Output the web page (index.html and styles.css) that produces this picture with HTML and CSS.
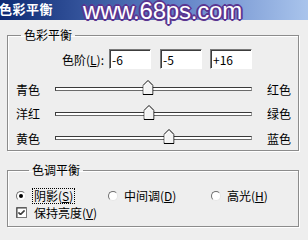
FILE: index.html
```html
<!DOCTYPE html>
<html lang="zh-CN">
<head>
    <meta charset="UTF-8">
    <title>色彩平衡</title>
    <link rel="stylesheet" href="styles.css">
</head>
<body>
    <div class="dialog">
        <header class="titlebar">
            <span class="title">色彩平衡</span>
            <span class="watermark">www.68ps.com</span>
        </header>

        <div class="content">
            <fieldset class="group balance">
                <legend>色彩平衡</legend>

                <div class="levels">
                    <label class="levels-label">色阶(<u>L</u>):</label>
                    <input class="num" type="text" value="-6">
                    <input class="num" type="text" value="-5">
                    <input class="num" type="text" value="+16">
                </div>

                <!-- 滑块位置 = (值 + 100) / 200 -->
                <div class="slider-row">
                    <span class="side">青色</span>
                    <div class="track">
                        <span class="thumb" style="left: 47%"><svg width="11" height="15" viewBox="0 0 11 15"><path d="M5.5 0.5 L10.5 5.5 L10.5 14.5 L0.5 14.5 L0.5 5.5 Z" fill="#f4f4f4" stroke="#000"/><path d="M5.5 1.8 L1.5 5.8 L1.5 13.5" fill="none" stroke="#fff"/></svg></span>
                    </div>
                    <span class="side right">红色</span>
                </div>
                <div class="slider-row">
                    <span class="side">洋红</span>
                    <div class="track">
                        <span class="thumb" style="left: 47.5%"><svg width="11" height="15" viewBox="0 0 11 15"><path d="M5.5 0.5 L10.5 5.5 L10.5 14.5 L0.5 14.5 L0.5 5.5 Z" fill="#f4f4f4" stroke="#000"/><path d="M5.5 1.8 L1.5 5.8 L1.5 13.5" fill="none" stroke="#fff"/></svg></span>
                    </div>
                    <span class="side right">绿色</span>
                </div>
                <div class="slider-row">
                    <span class="side">黄色</span>
                    <div class="track">
                        <span class="thumb" style="left: 58%"><svg width="11" height="15" viewBox="0 0 11 15"><path d="M5.5 0.5 L10.5 5.5 L10.5 14.5 L0.5 14.5 L0.5 5.5 Z" fill="#f4f4f4" stroke="#000"/><path d="M5.5 1.8 L1.5 5.8 L1.5 13.5" fill="none" stroke="#fff"/></svg></span>
                    </div>
                    <span class="side right">蓝色</span>
                </div>
            </fieldset>

            <fieldset class="group tone">
                <legend>色调平衡</legend>

                <div class="radios">
                    <label class="option">
                        <span class="radio checked"></span>
                        <span class="focus">阴影(<u>S</u>)</span>
                    </label>
                    <label class="option">
                        <span class="radio"></span>
                        <span>中间调(<u>D</u>)</span>
                    </label>
                    <label class="option">
                        <span class="radio"></span>
                        <span>高光(<u>H</u>)</span>
                    </label>
                </div>

                <label class="option check-row">
                    <svg class="checkbox" width="11" height="11" viewBox="0 0 11 11"><rect x="0.5" y="0.5" width="10" height="10" fill="#fff" stroke="#7a7a7a"/><path d="M1 10.5 V1 H10" fill="none" stroke="#404040"/><path d="M2.5 5 L4.5 7 L8.5 3 M2.5 6 L4.5 8 L8.5 4" fill="none" stroke="#000"/></svg>
                    <span>保持亮度(<u>V</u>)</span>
                </label>
            </fieldset>
        </div>
    </div>
</body>
</html>
```

FILE: styles.css
```css
* {
    box-sizing: border-box;
}

body {
    margin: 0;
    background: #eeeeee;
    font-family: "Noto Sans CJK SC", "Liberation Sans", sans-serif;
    font-size: 12px;
    color: #000;
    overflow: hidden;
}

.dialog {
    width: 308px;
    height: 240px;
}

.titlebar {
    height: 20px;
    display: flex;
    align-items: flex-start;
    background: linear-gradient(to right, #0d2a74, #5d7fc4 55%, #a9c4ec);
    white-space: nowrap;
}

.titlebar .title {
    margin-left: -1px;
    color: #fff;
    font-weight: bold;
    font-size: 13px;
    line-height: 18px;
    letter-spacing: 0.5px;
}

.titlebar .watermark {
    margin-left: 30px;
    margin-top: -2px;
    font-family: "Liberation Sans", sans-serif;
    font-size: 24px;
    line-height: 26px;
    color: #fff;
    letter-spacing: -0.2px;
    text-shadow:
        1px 1px 0 #5a3590, -1px -1px 0 #5a3590, 1px -1px 0 #5a3590, -1px 1px 0 #5a3590,
        2px 0 0 #5a3590, -2px 0 0 #5a3590, 0 2px 0 #5a3590, 0 -2px 0 #5a3590,
        0 0 3px #8d6cc0;
}

.content {
    padding: 8px 9px 0 7px;
}

.group {
    margin: 0;
    padding: 0;
    min-width: 0;
    border: 1px solid #8c8c8c;
    box-shadow: 1px 1px 0 #fff, inset 1px 1px 0 #fff;
}

.group legend {
    margin-left: 13px;
    padding: 0 3px 0 3px;
    line-height: 14px;
}

.balance {
    height: 123px;
}

.levels {
    display: flex;
    align-items: center;
    gap: 9px;
    margin-top: 7px;
}

.levels-label {
    width: 97px;
    margin-right: -5px;
    text-align: right;
    padding-right: 1px;
}

.num {
    width: 42px;
    height: 20px;
    margin: 0;
    padding: 0 0 0 2px;
    font: inherit;
    background: #fff;
    border: 1px solid #fff;
    border-top-color: #7a7a7a;
    border-left-color: #7a7a7a;
    box-shadow: inset 1px 1px 0 #3c3c3c;
    outline: none;
}

.num:last-child {
    margin-left: -1px;
}

.levels + .slider-row {
    margin-top: 8px;
}

.slider-row {
    display: grid;
    grid-template-columns: 39px 197px 1fr;
    align-items: center;
    height: 24.5px;
    padding-left: 8px;
}

.side.right {
    padding-left: 15px;
}

.track {
    position: relative;
    height: 4px;
    background: #fff;
    border: 1px solid #3a3a3a;
    border-right-color: #9a9a9a;
    border-bottom-color: #6a6a6a;
}

.thumb {
    position: absolute;
    top: -8px;
    width: 11px;
    height: 15px;
    transform: translateX(-50%);
}

.thumb svg {
    display: block;
}

.tone {
    margin-top: 12px;
    padding: 0 0 5px 8px;
}

.radios {
    display: grid;
    grid-template-columns: 92px 103px 1fr;
    height: 16px;
    margin-top: 10px;
    align-items: center;
}

.option {
    display: flex;
    align-items: center;
    gap: 6px;
    white-space: nowrap;
}

.radio {
    position: relative;
    width: 10px;
    height: 10px;
    flex: none;
    border-radius: 50%;
    background: #fff;
    border: 1px solid #e6e6e6;
    border-top-color: #6e6e6e;
    border-left-color: #6e6e6e;
}

.radio.checked::after {
    content: "";
    position: absolute;
    left: 2px;
    top: 2px;
    width: 4px;
    height: 4px;
    border-radius: 50%;
    background: #000;
}

.focus {
    padding: 0 1px;
    border: 1px dotted #000;
    line-height: 14px;
}

.check-row {
    height: 18px;
    gap: 7px;
}

.checkbox {
    flex: none;
    display: block;
}
```
